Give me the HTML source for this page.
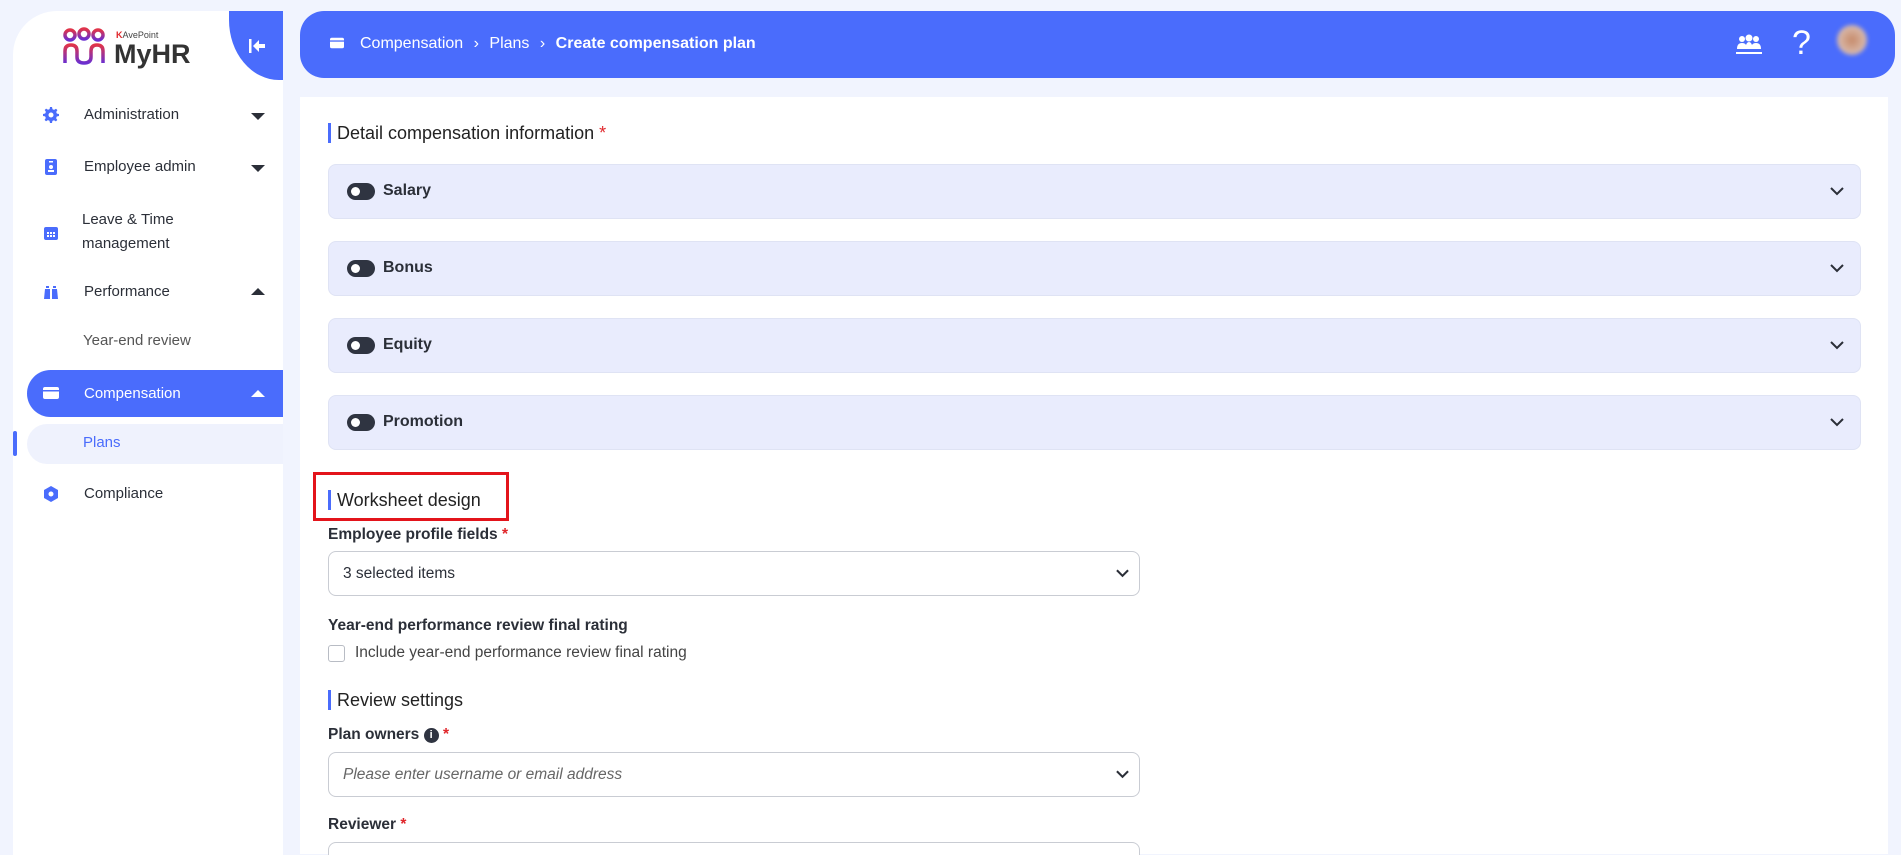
<!DOCTYPE html>
<html><head><meta charset="utf-8"><style>
*{box-sizing:border-box;margin:0;padding:0}
html,body{width:1901px;height:855px;overflow:hidden}
body{background:#f1f4fe;font-family:"Liberation Sans",sans-serif;color:#2b2f38}
#w{position:relative;width:1901px;height:855px;overflow:hidden}
.side{position:absolute;left:13px;top:11px;width:270px;height:850px;background:#fff;border-radius:44px 0 0 0}
.collapse{position:absolute;left:229px;top:11px;width:54px;height:69px;background:#4a6cfc;border-radius:0 0 0 50px/0 0 0 60px}
.item{position:absolute;left:0;width:270px;font-size:15px;color:#2b2f38}
.item .ic{position:absolute;left:30px;width:16px;height:16px;color:#4a6cfc}
.item .tx{position:absolute;left:71px}
.item .ar{position:absolute;left:238px;width:0;height:0;border-left:7px solid transparent;border-right:7px solid transparent}
.down{border-top:7px solid #2b2f38}
.up{border-bottom:7px solid #2b2f38}
.hdr{position:absolute;left:300px;top:11px;width:1595px;height:67px;background:#4a6cfc;border-radius:24px}
.card{position:absolute;left:300px;top:97px;width:1588px;height:757px;background:#fff}
.sec{position:absolute;left:328px;font-size:18px;border-left:3px solid #4a6cfc;padding-left:6px;line-height:20px;color:#222}
.req{color:#e0262b}
.acc{position:absolute;left:328px;width:1533px;height:55px;background:#e9ecfd;border:1px solid #dfe3f4;border-radius:8px}
.acc .tg{position:absolute;left:18px;top:18px;width:28px;height:17px;border-radius:9px;background:#2f3441}
.acc .tg:after{content:"";position:absolute;left:4px;top:4px;width:9px;height:9px;border-radius:50%;background:#fff}
.acc .t{position:absolute;left:54px;top:17px;font-size:16px;font-weight:bold}
.acc svg{position:absolute;right:16px;top:22px}
.lbl{position:absolute;left:328px;font-size:15.5px;font-weight:bold;color:#2b2f38}
.inp{position:absolute;left:328px;width:812px;height:45px;border:1px solid #c9ccd3;border-radius:8px;background:#fff}
.inp span{position:absolute;left:14px;top:13px;font-size:15.5px}
.inp svg{position:absolute;right:10px;top:17px}
</style></head><body><div id="w">
<div class="side">
 <div style="position:absolute;left:48px;top:16px">
  <svg width="46" height="40" viewBox="0 0 46 40"><defs><linearGradient id="g" x1="0" y1="0" x2="0" y2="1"><stop offset="0" stop-color="#e0344a"/><stop offset="1" stop-color="#6b2fd0"/></linearGradient></defs>
  <g fill="none" stroke="url(#g)" stroke-width="3.5"><circle cx="9" cy="8" r="5"/><circle cx="23" cy="7" r="5"/><circle cx="37" cy="8" r="5"/>
  <path d="M4 36 V24 Q4 18 10 18 Q16 18 16 24 V30 Q16 36 23 36 Q30 36 30 30 V24 Q30 18 36 18 Q42 18 42 24 V36"/></g></svg>
 </div>
 <div style="position:absolute;left:103px;top:19px;font-size:9px;color:#444"><span style="color:#e0262b;font-weight:bold">K</span>AvePoint</div>
 <div style="position:absolute;left:101px;top:28px;font-size:27px;font-weight:bold;color:#333">MyHR</div>
 <div class="item" style="top:95px"><svg class="ic" viewBox="0 0 16 16" style="top:1px"><path fill="#4a6cfc" d="M7 0h2l.5 2.2 1.6.7 1.9-1.2 1.4 1.4-1.2 1.9.7 1.6L16 7v2l-2.2.5-.7 1.6 1.2 1.9-1.4 1.4-1.9-1.2-1.6.7L9 16H7l-.5-2.2-1.6-.7-1.9 1.2-1.4-1.4 1.2-1.9-.7-1.6L0 9V7l2.2-.5.7-1.6-1.2-1.9 1.4-1.4 1.9 1.2 1.6-.7zM8 5.5a2.5 2.5 0 100 5 2.5 2.5 0 000-5z"/></svg><span class="tx">Administration</span><span class="ar down" style="top:7px"></span></div>
 <div class="item" style="top:147px"><svg class="ic" viewBox="0 0 16 16" style="top:1px"><rect x="2" y="0" width="12" height="16" rx="2" fill="#4a6cfc"/><circle cx="8" cy="8" r="2" fill="#fff"/><rect x="5" y="11" width="6" height="2" fill="#fff"/><rect x="6" y="2" width="4" height="1.5" fill="#fff"/></svg><span class="tx">Employee admin</span><span class="ar down" style="top:7px"></span></div>
 <div class="item" style="top:197px;line-height:24px"><svg class="ic" viewBox="0 0 16 16" style="top:17px"><rect x="1" y="2" width="14" height="13" rx="2" fill="#4a6cfc"/><g fill="#fff"><rect x="4" y="7" width="2" height="2"/><rect x="7" y="7" width="2" height="2"/><rect x="10" y="7" width="2" height="2"/><rect x="4" y="10" width="2" height="2"/><rect x="7" y="10" width="2" height="2"/><rect x="10" y="10" width="2" height="2"/></g></svg><span class="tx" style="left:69px">Leave &amp; Time<br>management</span></div>
 <div class="item" style="top:272px"><svg class="ic" viewBox="0 0 16 16" style="top:1px"><path fill="#4a6cfc" d="M1 15 L2 5 H7 V15z M9 15 V5 H14 L15 15z M3 2h3v2H3z M10 2h3v2h-3z"/></svg><span class="tx">Performance</span><span class="ar up" style="top:5px"></span></div>
 <div class="item" style="top:321px;color:#555"><span class="tx" style="left:70px">Year-end review</span></div>
 <div style="position:absolute;left:14px;top:359px;width:256px;height:47px;background:#4a6cfc;border-radius:24px 0 0 24px"></div>
 <div class="item" style="top:374px;color:#fff"><svg class="ic" viewBox="0 0 16 16" style="top:0"><rect x="0" y="2" width="16" height="12" rx="2" fill="#fff"/><rect x="0" y="5" width="16" height="1.5" fill="#4a6cfc"/></svg><span class="tx">Compensation</span><span class="ar" style="top:5px;border-bottom:7px solid #fff"></span></div>
 <div style="position:absolute;left:14px;top:413px;width:256px;height:40px;background:#eff2fd;border-radius:20px 0 0 20px"></div>
 <div style="position:absolute;left:0;top:420px;width:4px;height:25px;background:#4a6cfc;border-radius:2px"></div>
 <div class="item" style="top:423px;color:#4a6cfc"><span class="tx" style="left:70px">Plans</span></div>
 <div class="item" style="top:474px"><svg class="ic" viewBox="0 0 16 16" style="top:1px"><path fill="#4a6cfc" d="M8 0l7 4v8l-7 4-7-4V4z"/><circle cx="8" cy="8" r="2.5" fill="#fff"/></svg><span class="tx">Compliance</span></div>
</div>
<div class="collapse"><svg style="position:absolute;left:20px;top:28px" width="16" height="14" viewBox="0 0 16 14"><rect x="0" y="0" width="2.5" height="14" fill="#fff"/><path d="M4 7 L10 1 V5 H16 V9 H10 V13z" fill="#fff"/></svg></div>
<div class="hdr">
 <svg style="position:absolute;left:30px;top:25px" width="14" height="14" viewBox="0 0 16 16"><rect x="0" y="2" width="16" height="12" rx="2" fill="#fff"/><rect x="0" y="5" width="16" height="1.5" fill="#4a6cfc"/></svg>
 <div style="position:absolute;left:60px;top:24px;font-size:16px;color:#fff;white-space:nowrap">Compensation <span style="margin:0 6px">›</span> Plans <span style="margin:0 6px">›</span> <b>Create compensation plan</b></div>
 <svg style="position:absolute;left:1436px;top:23px" width="26" height="22" viewBox="0 0 26 22"><g fill="#fff"><circle cx="6" cy="5" r="3"/><circle cx="13" cy="4" r="3.5"/><circle cx="20" cy="5" r="3"/><path d="M1 15 Q1 9 6 9 Q9 9 10 11 Q11 8 13 8 Q15 8 16 11 Q17 9 20 9 Q25 9 25 15z"/><rect x="0" y="18" width="26" height="2"/></g></svg>
 <div style="position:absolute;left:1492px;top:13px;font-size:34px;color:#fff;line-height:38px">?</div>
 <div style="position:absolute;left:1537px;top:14px;width:30px;height:30px;border-radius:50%;background:radial-gradient(#c68a6a,#d8b6a5 60%,#9fb0f5);filter:blur(2px)"></div>
</div>
<div class="card"></div>
<div class="sec" style="top:123px">Detail compensation information <span class="req">*</span></div>
<div class="acc" style="top:164px"><div class="tg"></div><div class="t">Salary</div><svg width="14" height="9" viewBox="0 0 14 9"><path d="M1 1l6 6 6-6" fill="none" stroke="#2b2f38" stroke-width="2"/></svg></div>
<div class="acc" style="top:241px"><div class="tg"></div><div class="t">Bonus</div><svg width="14" height="9" viewBox="0 0 14 9"><path d="M1 1l6 6 6-6" fill="none" stroke="#2b2f38" stroke-width="2"/></svg></div>
<div class="acc" style="top:318px"><div class="tg"></div><div class="t">Equity</div><svg width="14" height="9" viewBox="0 0 14 9"><path d="M1 1l6 6 6-6" fill="none" stroke="#2b2f38" stroke-width="2"/></svg></div>
<div class="acc" style="top:395px"><div class="tg"></div><div class="t">Promotion</div><svg width="14" height="9" viewBox="0 0 14 9"><path d="M1 1l6 6 6-6" fill="none" stroke="#2b2f38" stroke-width="2"/></svg></div>
<div style="position:absolute;left:313px;top:472px;width:196px;height:49px;border:3px solid #e3141b"></div>
<div class="sec" style="top:490px">Worksheet design</div>
<div class="lbl" style="top:526px">Employee profile fields <span class="req">*</span></div>
<div class="inp" style="top:551px"><span>3 selected items</span><svg width="13" height="9" viewBox="0 0 14 9"><path d="M1 1l6 6 6-6" fill="none" stroke="#2b2f38" stroke-width="2.2"/></svg></div>
<div class="lbl" style="top:617px">Year-end performance review final rating</div>
<div style="position:absolute;left:328px;top:645px;width:17px;height:17px;border:1px solid #b8bcc4;border-radius:3px"></div>
<div style="position:absolute;left:355px;top:644px;font-size:15.5px;color:#444">Include year-end performance review final rating</div>
<div class="sec" style="top:690px">Review settings</div>
<div class="lbl" style="top:726px">Plan owners <span style="display:inline-block;width:15px;height:15px;border-radius:50%;background:#2f3441;color:#fff;font-size:11px;text-align:center;line-height:15px;vertical-align:1px">i</span> <span class="req">*</span></div>
<div class="inp" style="top:752px"><span style="font-style:italic;color:#666">Please enter username or email address</span><svg width="13" height="9" viewBox="0 0 14 9"><path d="M1 1l6 6 6-6" fill="none" stroke="#2b2f38" stroke-width="2.2"/></svg></div>
<div class="lbl" style="top:816px">Reviewer <span class="req">*</span></div>
<div class="inp" style="top:842px"></div>
</div></body></html>
